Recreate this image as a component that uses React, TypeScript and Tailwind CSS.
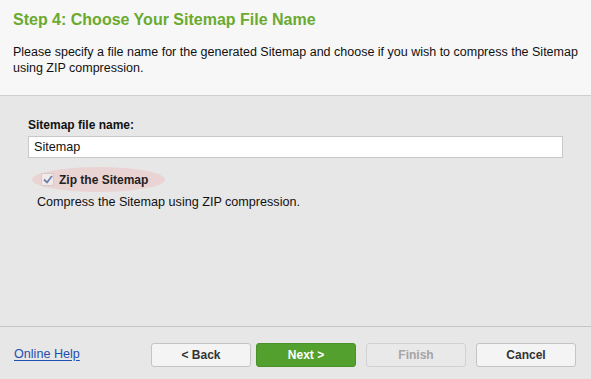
import { useState } from "react";

const font = { fontFamily: '"Liberation Sans", Arial, sans-serif' };

export default function App() {
  const [name, setName] = useState("Sitemap");
  const [zip, setZip] = useState(true);

  return (
    <div className="w-[591px] h-[379px] flex flex-col bg-[#e7e7e7] text-[#1a1a1a]" style={font}>
      {/* Header */}
      <div className="h-[96px] shrink-0 bg-[#f7f7f7] border-b border-[#cfcfcf] pl-[13px] pr-[2px] pt-[10px]">
        <h1 className="text-[16px] leading-[20px] font-bold text-[#6aaa2e]">Step 4: Choose Your Sitemap File Name</h1>
        <p className="mt-[14px] text-[12.5px] leading-[16px] text-[#111]">
          Please specify a file name for the generated Sitemap and choose if you wish to compress the Sitemap using ZIP compression.
        </p>
      </div>

      {/* Body */}
      <div className="flex-1 px-[28px] pt-[22px]">
        <label className="block text-[12px] leading-[14px] font-bold text-[#111]">Sitemap file name:</label>
        <input
          value={name}
          onChange={(e) => setName(e.target.value)}
          className="mt-[4px] w-[535px] h-[22px] bg-white border border-[#c8c8c8] px-[5px] text-[12.6px] text-[#111] outline-none"
          style={font}
        />
        <div className="mt-[9px] ml-[4px] flex">
          <label className="flex items-center gap-[5px] h-[25px] pl-[9px] pr-[17px] rounded-[50%] bg-[#ead3d3] cursor-pointer">
            <span
              onClick={() => setZip(!zip)}
              className="w-[13px] h-[13px] bg-[#f1eaea] border border-[#d9caca] flex items-center justify-center"
            >
              {zip && (
                <svg width="10" height="9" viewBox="0 0 10 9">
                  <path d="M1 4.5 L4 7.5 L9 1" fill="none" stroke="#6e7fa8" strokeWidth="1.8" />
                </svg>
              )}
            </span>
            <span className="text-[12px] font-bold text-[#222]">Zip the Sitemap</span>
          </label>
        </div>
        <p className="mt-[3px] ml-[9px] text-[12.6px] leading-[14px] text-[#111]">Compress the Sitemap using ZIP compression.</p>
      </div>

      {/* Footer */}
      <div className="h-[53px] shrink-0 border-t border-[#c6c6c6] flex items-center pl-[14px] pr-[15px] pt-[3px]">
        <a href="#" className="text-[12.6px] text-[#1f4fb0] underline underline-offset-[2px]">Online Help</a>
        <div className="ml-auto flex">
          <button className="w-[100px] h-[24px] rounded-[3px] border border-[#c4c4c4] bg-[#f4f4f4] text-[12px] font-bold text-[#333]">&lt; Back</button>
          <button className="ml-[5px] w-[100px] h-[24px] rounded-[3px] border border-[#4a9127] bg-[#53a02f] text-[12px] font-bold text-white">Next &gt;</button>
          <button disabled className="ml-[10px] w-[100px] h-[24px] rounded-[3px] border border-[#d2d2d2] bg-[#e9e9e9] text-[12px] font-bold text-[#a5a5a5]">Finish</button>
          <button className="ml-[10px] w-[100px] h-[24px] rounded-[3px] border border-[#c4c4c4] bg-[#f4f4f4] text-[12px] font-bold text-[#333]">Cancel</button>
        </div>
      </div>
    </div>
  );
}
